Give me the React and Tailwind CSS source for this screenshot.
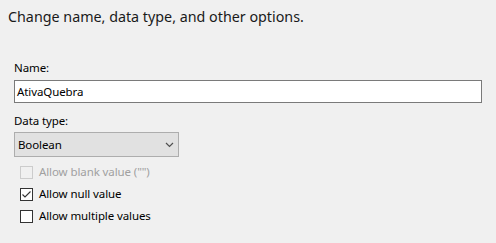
export default function App() {
  const font = "font-['Segoe_UI','Noto_Sans',sans-serif]";
  return (
    <div className={`w-[496px] h-[243px] bg-[#f0f0f0] text-[#000] ${font} overflow-hidden`}>
      <div className="mt-[7px] pl-[8px] h-[20px] leading-[20px] text-[14.3px] text-[#1a1a1a]">
        Change name, data type, and other options.
      </div>
      <div className="px-[14px] text-[11.5px] tracking-[-0.1px]">
        <div className="mt-[33px] h-[16px] leading-[16px]">Name:</div>
        <div className="mt-[4px] w-[468px] h-[23px] border border-[#7a7a7a] bg-white flex items-center pl-[2px] leading-[16px]">
          AtivaQuebra
        </div>
        <div className="mt-[10px] h-[16px] leading-[16px]">Data type:</div>
        <div className="mt-[3px] w-[165px] h-[25px] border border-[#adadad] bg-[#e1e1e1] flex items-center justify-between pl-[3px] pr-[4px]">
          <span className="leading-[16px]">Boolean</span>
          <svg width="9" height="6" viewBox="0 0 9 6">
            <path d="M1 1 L4.5 4.5 L8 1" fill="none" stroke="#505050" strokeWidth="1.2" />
          </svg>
        </div>
        <div className="mt-[4px] pl-[6px]">
          <div className="h-[22px] flex items-center gap-[6px] text-[#a0a0a0]">
            <span className="w-[13px] h-[13px] border border-[#cccccc] bg-[#f0f0f0]" />
            <span className="leading-[16px]">Allow blank value ("")</span>
          </div>
          <div className="h-[22px] flex items-center gap-[6px]">
            <span className="w-[13px] h-[13px] border border-[#333333] bg-white flex items-center justify-center">
              <svg width="11" height="11" viewBox="0 0 11 11">
                <path d="M1.5 5.5 L4 8 L9.5 2.5" fill="none" stroke="#333333" strokeWidth="1.1" />
              </svg>
            </span>
            <span className="leading-[16px]">Allow null value</span>
          </div>
          <div className="h-[22px] flex items-center gap-[6px]">
            <span className="w-[13px] h-[13px] border border-[#333333] bg-white" />
            <span className="leading-[16px]">Allow multiple values</span>
          </div>
        </div>
      </div>
    </div>
  );
}
